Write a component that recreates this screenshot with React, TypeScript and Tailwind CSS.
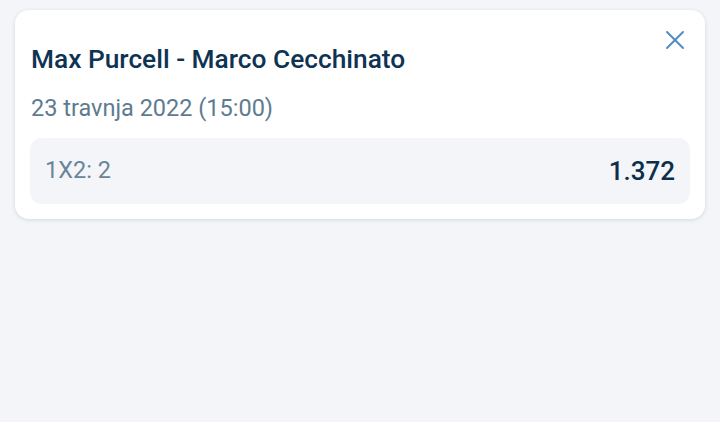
import { X } from "lucide-react";

export default function App() {
  return (
    <div className="min-h-[422px] w-[720px] bg-[#f3f5f9] px-[15px] pt-[10px] font-['Roboto',sans-serif]">
      <div className="relative rounded-[14px] bg-white px-[15px] pt-[33px] pb-[15px] shadow-[0_1px_4px_rgba(15,40,70,0.14)]">
        <button className="absolute top-[14px] right-[14px] text-[#4f8bc4]" aria-label="Zatvori">
          <X className="size-[32px]" strokeWidth={1.4} />
        </button>
        <h2 className="px-[1px] text-[26.3px]/[32px] font-medium text-[#0e3353]">
          Max Purcell - Marco Cecchinato
        </h2>
        <p className="mt-[19px] px-[1px] text-[23.5px]/[28px] text-[#5e7b90]">
          23 travnja 2022 (15:00)
        </p>
        <div className="mt-[16px] flex h-[66px] items-center justify-between rounded-[12px] bg-[#f3f5f8] px-[15px]">
          <span className="text-[23.5px] text-[#6a8599]">1X2: 2</span>
          <span className="text-[26px] font-medium text-[#0e2f4c]">1.372</span>
        </div>
      </div>
    </div>
  );
}
